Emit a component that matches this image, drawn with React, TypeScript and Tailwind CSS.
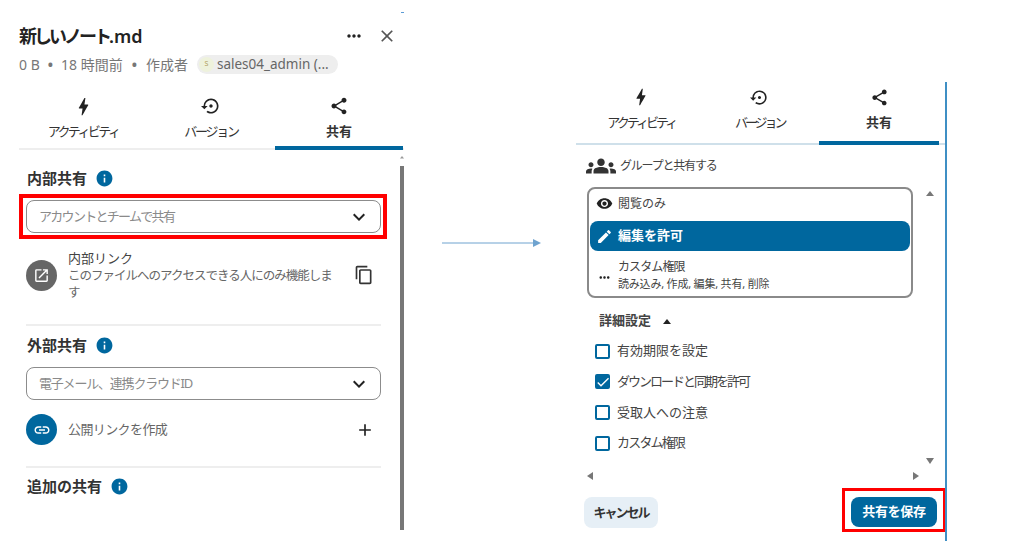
import React from "react";
import {
  MdAdd, MdBolt, MdCheck, MdClose, MdContentCopy, MdEdit, MdExpandMore, MdGroups, MdInfo, MdLink, MdMoreHoriz,
  MdOpenInNew, MdSettingsBackupRestore, MdShare, MdVisibility,
} from "react-icons/md";

const font = "font-['Noto_Sans','Noto_Sans_CJK_JP',sans-serif]";

function Tabs({ compact }: { compact?: boolean }) {
  const size = compact ? 19 : 20;
  return (
    <div className={compact ? "flex h-[58px] border-b-2 border-[#cfe0ea] pl-[6px]" : "flex h-[56px] border-b-2 border-[#eeeeee]"}>
      <div className={`flex flex-col items-center ${compact ? "w-[118.5px]" : "w-[128px] pt-[2px]"}`}>
        <div className="flex h-[20px] items-center text-[#222222]"><MdBolt size={size + 3} /></div>
        <div className={`text-[13px] leading-[18px] text-[#333333] ${compact ? "mt-[6px] tracking-[-3px]" : "mt-[6px] tracking-[-2.6px]"}`}>アクティビティ</div>
      </div>
      <div className={`flex flex-col items-center ${compact ? "w-[118.5px]" : "w-[128px] pt-[2px]"}`}>
        <div className="flex h-[20px] items-center text-[#222222]"><MdSettingsBackupRestore size={size} /></div>
        <div className={`text-[13px] leading-[18px] text-[#333333] ${compact ? "mt-[6px] tracking-[-3px]" : "mt-[6px] tracking-[-2.2px]"}`}>バージョン</div>
      </div>
      <div className={`-mb-[2px] flex flex-col items-center border-b-[4px] border-[#00679e] ${compact ? "w-[120px]" : "w-[128px] pt-[2px]"}`}>
        <div className="flex h-[20px] items-center text-[#222222]"><MdShare size={size} /></div>
        <div className={`text-[13px] font-bold leading-[18px] text-[#333333] ${compact ? "mt-[6px]" : "mt-[6px]"}`}>共有</div>
      </div>
    </div>
  );
}

function Heading({ text }: { text: string }) {
  return (
    <div className="ml-[1px] flex h-[20px] items-center gap-[8px] text-[15px] font-bold text-[#333333]">
      <span>{text}</span>
      <MdInfo size={19} className="text-[#00679e]" />
    </div>
  );
}

function Field({ text, tracking }: { text: string; tracking: string }) {
  return (
    <div className="flex h-[33px] items-center justify-between rounded-[8px] border border-[#8c8c8c] bg-white pl-[12px] pr-[9px]">
      <span className={`text-[13px] text-[#8a8a8a] ${tracking}`}>{text}</span>
      <MdExpandMore size={24} className="text-[#222222]" />
    </div>
  );
}

function Check({ label, checked, tracking }: { label: string; checked?: boolean; tracking?: string }) {
  return (
    <div className="flex h-[16px] items-center gap-[7px]">
      <div className={`flex h-[15px] w-[15px] items-center justify-center rounded-[2px] border-2 border-[#00679e] ${checked ? "bg-[#00679e]" : "bg-white"}`}>
        {checked && <MdCheck size={16} className="shrink-0 text-white" />}
      </div>
      <span className={`text-[13px] text-[#444444] ${tracking ?? ""}`}>{label}</span>
    </div>
  );
}

function Tri({ dir, className }: { dir: "up" | "down" | "left" | "right"; className?: string }) {
  const pts = { up: "0,7 4,2 8,7", down: "0,1 8,1 4,7", left: "7,0 7,8 1,4", right: "1,0 1,8 7,4" }[dir];
  return (
    <svg width="8" height="8" viewBox="0 0 8 8" className={`shrink-0 ${className ?? ""}`}>
      <polygon points={pts} fill="currentColor" />
    </svg>
  );
}

function LeftPanel() {
  return (
    <div className="relative h-[559px] w-[404px] shrink-0 pl-[19px] pt-[22px]">
      <div className="flex h-[28px] items-center justify-between pr-[7px]">
        <span className="text-[18px] font-semibold text-[#222222]">
          <span className="tracking-[-3px]">新しいノート</span>.md
        </span>
        <div className="flex items-center gap-[13px]">
          <MdMoreHoriz size={20} className="text-[#222222]" />
          <MdClose size={20} className="text-[#555555]" />
        </div>
      </div>
      <div className="mt-[4px] flex h-[20px] items-center text-[14px] text-[#777777]">
        <span>0 B</span>
        <span className="mx-[8px] font-bold">•</span>
        <span>18 時間前</span>
        <span className="mx-[9px] font-bold">•</span>
        <span>作成者</span>
        <span className="ml-[9px] flex h-[19px] w-[141px] items-center rounded-full bg-[#eeeeee] text-[13.5px] text-[#666666]">
          <span className="ml-[2px] mr-[3px] flex h-[15px] w-[15px] items-center justify-center rounded-full bg-[#eef2dc] text-[7px] text-[#b0a060]">S</span>
          sales04_admin (...
        </span>
      </div>
      <div className="mt-[20px]">
        <Tabs />
      </div>

      <div className="ml-[7px] w-[355px] pt-[18px]">
        <Heading text="内部共有" />
        <div className="-mx-[7px] mt-[6px] w-[368px] border-[4px] border-[#ff0000] px-[3px] py-[2px]">
          <div className="-mr-[1px]">
            <Field text="アカウントとチームで共有" tracking="tracking-[-1.7px]" />
          </div>
        </div>
        <div className="mt-[8px] flex h-[56px] items-center">
          <div className="flex h-[31px] w-[31px] shrink-0 items-center justify-center rounded-full bg-[#666666]">
            <MdOpenInNew size={17} className="text-white" />
          </div>
          <div className="ml-[11px] w-[268px] text-[#666666]">
            <div className="text-[13px] leading-[18px] text-[#444444]">内部リンク</div>
            <div className="text-[12.5px] leading-[17px] tracking-[-1px]">このファイルへのアクセスできる人にのみ機能します</div>
          </div>
          <MdContentCopy size={20} className="ml-[18px] text-[#333333]" />
        </div>
        <div className="mt-[21px] border-t-2 border-[#eeeeee] pt-[9px]">
          <Heading text="外部共有" />
        </div>
        <div className="mt-[12px]">
          <Field text="電子メール、連携クラウドID" tracking="tracking-[-1.2px]" />
        </div>
        <div className="mt-[14px] flex h-[31px] items-center">
          <div className="flex h-[31px] w-[31px] shrink-0 items-center justify-center rounded-full bg-[#00679e]">
            <MdLink size={18} className="text-white" />
          </div>
          <span className="ml-[11px] text-[13px] tracking-[-0.6px] text-[#666666]">公開リンクを作成</span>
          <MdAdd size={20} className="ml-auto mr-[6px] text-[#222222]" />
        </div>
        <div className="mt-[21px] border-t-2 border-[#eeeeee] pt-[8px]">
          <Heading text="追加の共有" />
        </div>
      </div>

      <div className="absolute right-0 top-[154px] flex flex-col items-center">
        <Tri dir="up" className="mb-[6px] h-[6px] w-[4px] text-[#999999]" />
        <div className="h-[364px] w-[4px] bg-[#777777]" />
      </div>
      <div className="absolute right-0 top-[12px] h-[1px] w-[3px] bg-[#5b9bd5]" />
    </div>
  );
}

function Arrow() {
  return (
    <div className="ml-[38px] mt-[236px] h-[14px] w-[100px] shrink-0">
      <svg width="100" height="14" viewBox="0 0 100 14">
        <line x1="0" y1="7" x2="92" y2="7" stroke="#6fa3cf" strokeWidth="1" />
        <polygon points="91,3 99,7 91,11" fill="#6fa3cf" />
      </svg>
    </div>
  );
}

function RightPanel() {
  return (
    <div className="ml-[34px] mt-[82px] h-[459px] w-[371px] shrink-0 border-r-2 border-[#3f8fc4]">
      <div className="pt-[5px]">
        <Tabs compact />
      </div>
      <div className="flex">
        <div className="w-[349px] pb-[14px]">
          <div className="ml-[10px] mt-[9px] flex h-[24px] items-center gap-[4px]">
            <MdGroups size={30} className="-my-[4px] text-[#333333]" />
            <span className="text-[12px] tracking-[-1.2px] text-[#444444]">グループと共有する</span>
          </div>
          <div className="ml-[11px] mt-[9px] h-[111px] w-[326px] rounded-[8px] border-2 border-[#8a8a8a] p-[1px]">
            <div className="flex h-[31px] items-center gap-[5px] pb-[4px] pl-[6px] text-[12px] text-[#444444]">
              <MdVisibility size={17} className="text-[#222222]" />
              閲覧のみ
            </div>
            <div className="flex h-[30px] items-center gap-[5px] rounded-[8px] bg-[#00679e] pl-[6px] text-[13px] font-bold text-white">
              <MdEdit size={17} />
              編集を許可
            </div>
            <div className="flex h-[46px] items-center gap-[6px] pl-[7px]">
              <MdMoreHoriz size={15} className="mt-[6px] text-[#222222]" />
              <div className="text-[#444444]">
                <div className="text-[12px] leading-[18px] tracking-[-0.9px]">カスタム権限</div>
                <div className="text-[11px] leading-[15px] tracking-[-0.2px]">読み込み, 作成, 編集, 共有, 削除</div>
              </div>
            </div>
          </div>
          <div className="ml-[23px] mt-[14px] flex h-[18px] items-center gap-[12px] text-[13px] font-bold text-[#444444]">
            詳細設定
            <Tri dir="up" className="text-[#222222]" />
          </div>
          <div className="ml-[19px] mt-[13px] flex flex-col gap-[14.7px]">
            <Check label="有効期限を設定" />
            <Check label="ダウンロードと同期を許可" checked tracking="tracking-[-2px]" />
            <Check label="受取人への注意" />
            <Check label="カスタム権限" tracking="tracking-[-1.8px]" />
          </div>
        </div>
        <div className="flex w-[10px] flex-col items-center justify-between">
          <Tri dir="up" className="mt-[44px] text-[#777777]" />
          <Tri dir="down" className="text-[#777777]" />
        </div>
      </div>
      <div className="ml-[10px] mr-[25px] mt-[6px] flex h-[10px] items-center justify-between">
        <Tri dir="left" className="text-[#777777]" />
        <Tri dir="right" className="text-[#777777]" />
      </div>
      <div className="mt-[16px] flex items-start justify-between pl-[8px]">
        <div className="flex h-[31px] w-[74px] items-center justify-center rounded-[8px] bg-[#e6eff6] text-[13px] font-bold tracking-[-2px] text-[#333333]">キャンセル</div>
        <div className="-mt-[9px] h-[44px] w-[103px] border-[3px] border-r-[2px] border-[#ff0000] pl-[6px] pt-[6px]">
          <div className="flex h-[30px] w-[86px] items-center justify-center rounded-[8px] bg-[#00679e] text-[13px] font-bold tracking-[-0.3px] text-white">共有を保存</div>
        </div>
      </div>
    </div>
  );
}

export default function App() {
  return (
    <div className={`flex h-[559px] w-[1024px] overflow-hidden bg-white ${font}`}>
      <LeftPanel />
      <Arrow />
      <RightPanel />
    </div>
  );
}
